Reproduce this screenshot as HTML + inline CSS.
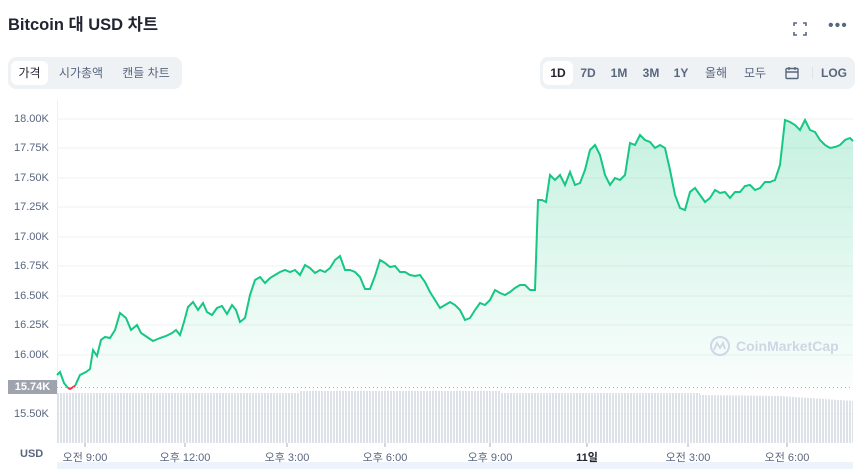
<!DOCTYPE html>
<html><head><meta charset="utf-8"><style>
body{margin:0;width:860px;height:469px;background:#fff;font-family:"Liberation Sans","Noto Sans CJK KR",sans-serif;color:#222531;position:relative;overflow:hidden}
.a{position:absolute}
.title{left:8px;top:11px;font-size:16.5px;font-weight:bold}
.grp{background:#eff2f5;border-radius:8px;height:32px;top:57px}
.tab{position:absolute;top:4px;height:24px;line-height:24px;font-size:12px;color:#58667e;text-align:center}
.act{background:#fff;border-radius:6px;color:#222531}
.b{font-weight:bold}
.yl{font-size:11px;color:#58667e;left:14px}
.xl{font-size:11px;color:#58667e;top:449px;transform:translateX(-50%)}
</style></head><body>
<div class="a title">Bitcoin 대 USD 차트</div>
<svg class="a" style="left:792px;top:21px" width="16" height="16" viewBox="0 0 16 16" fill="none" stroke="#58667e" stroke-width="1.6"><path d="M2 5V2h3M11 2h3v3M14 11v3h-3M5 14H2v-3"/></svg>
<div class="a" style="left:828px;top:17px;font-size:16px;color:#58667e;letter-spacing:1px">•••</div>
<div class="a grp" style="left:8px;width:174px">
<div class="tab act" style="left:3px;width:37px">가격</div>
<div class="tab" style="left:44px;width:58px">시가총액</div>
<div class="tab" style="left:106px;width:64px">캔들 차트</div>
</div>
<div class="a grp" style="left:540px;width:315px">
<div class="tab act b" style="left:3px;width:30px">1D</div>
<div class="tab b" style="left:34px;width:28px">7D</div>
<div class="tab b" style="left:64px;width:30px">1M</div>
<div class="tab b" style="left:96px;width:30px">3M</div>
<div class="tab b" style="left:128px;width:26px">1Y</div>
<div class="tab" style="left:158px;width:36px">올해</div>
<div class="tab" style="left:198px;width:34px">모두</div>
<svg class="a" style="left:245px;top:9px" width="14" height="14" viewBox="0 0 14 14" fill="none" stroke="#58667e" stroke-width="1.4"><rect x="1" y="2.5" width="12" height="10" rx="1"/><path d="M1 6h12M4 1v3M10 1v3"/></svg>
<div class="a" style="left:272px;top:10px;width:1px;height:12px;background:#dfe3e8"></div>
<div class="tab b" style="left:278px;width:32px">LOG</div>
</div>
<div class="a" style="left:57px;top:100px;width:1px;height:343px;background:#eff2f5"></div>
<svg class="a" style="left:0;top:0" width="860" height="469">
<defs><linearGradient id="g" x1="0" y1="0" x2="0" y2="1"><stop offset="0" stop-color="#16c784" stop-opacity=".25"/><stop offset="1" stop-color="#16c784" stop-opacity=".02"/></linearGradient>
<pattern id="v" width="3" height="60" patternUnits="userSpaceOnUse"><rect width="2" height="60" fill="#dde1e8"/></pattern></defs>
<g stroke="#eff2f5"><path d="M57 119H853M57 148H853M57 178H853M57 207H853M57 237H853M57 266H853M57 296H853M57 325H853M57 355H853M57 414H853"/></g>
<path fill="url(#v)" d="M57 393H300V391H500V393H700V395L780 396L853 401V443H57Z"/>
<path fill="url(#g)" d="M57 375L60 372L64 383L70 389L75 386L80 375L86 372L90 369L93 350L97 356L101 340L105 337L110 338L115 330L120 313L126 318L131 330L137 325L141 333L147 337L153 341L160 338L166 336L172 333L176 330L180 335L184 322L188 307L193 302L198 310L203 303L207 312L212 315L217 308L222 306L227 314L232 305L236 310L240 322L245 318L250 295L255 280L260 277L265 283L270 278L275 275L280 272L285 270L290 272L295 270L300 275L305 265L310 268L315 273L320 270L325 272L330 268L335 260L340 256L345 270L350 270L355 272L360 277L365 289L370 289L375 276L380 260L385 263L390 267L395 266L400 272L405 272L410 275L415 276L420 275L425 282L430 292L435 300L440 308L445 305L450 302L455 305L460 310L465 320L470 318L475 310L480 303L485 305L490 300L495 290L500 293L505 295L510 292L515 288L520 285L525 285L530 290L535 290L538 200L542 200L546 202L550 175L555 180L560 175L565 185L570 172L575 185L580 183L585 170L590 150L595 145L600 155L605 175L610 185L615 178L620 180L625 175L630 143L635 145L640 135L645 140L650 142L655 148L660 145L665 148L670 170L675 195L680 208L685 210L690 192L695 188L700 195L705 202L710 198L715 190L720 193L725 192L730 198L735 192L740 192L745 186L750 185L755 190L760 188L765 182L770 182L775 180L780 165L785 120L790 122L795 125L800 130L805 120L810 130L815 132L820 140L825 145L830 148L835 147L840 145L845 140L850 138L853 141V387H57Z"/>
<path fill="none" stroke="#16c784" stroke-width="2" d="M57 375L60 372L64 383L68 388M75 386L80 375L86 372L90 369L93 350L97 356L101 340L105 337L110 338L115 330L120 313L126 318L131 330L137 325L141 333L147 337L153 341L160 338L166 336L172 333L176 330L180 335L184 322L188 307L193 302L198 310L203 303L207 312L212 315L217 308L222 306L227 314L232 305L236 310L240 322L245 318L250 295L255 280L260 277L265 283L270 278L275 275L280 272L285 270L290 272L295 270L300 275L305 265L310 268L315 273L320 270L325 272L330 268L335 260L340 256L345 270L350 270L355 272L360 277L365 289L370 289L375 276L380 260L385 263L390 267L395 266L400 272L405 272L410 275L415 276L420 275L425 282L430 292L435 300L440 308L445 305L450 302L455 305L460 310L465 320L470 318L475 310L480 303L485 305L490 300L495 290L500 293L505 295L510 292L515 288L520 285L525 285L530 290L535 290L538 200L542 200L546 202L550 175L555 180L560 175L565 185L570 172L575 185L580 183L585 170L590 150L595 145L600 155L605 175L610 185L615 178L620 180L625 175L630 143L635 145L640 135L645 140L650 142L655 148L660 145L665 148L670 170L675 195L680 208L685 210L690 192L695 188L700 195L705 202L710 198L715 190L720 193L725 192L730 198L735 192L740 192L745 186L750 185L755 190L760 188L765 182L770 182L775 180L780 165L785 120L790 122L795 125L800 130L805 120L810 130L815 132L820 140L825 145L830 148L835 147L840 145L845 140L850 138L853 141"/>
<path fill="none" stroke="#ea3943" stroke-width="2" d="M68 388L70 389L75 386"/>
<path stroke="#a6b0c3" stroke-dasharray="1 3" d="M57 387.5H853"/>
<g stroke="#a6b0c3"><path d="M85 443v4M185 443v4M287 443v4M385 443v4M490 443v4M587 443v4M688 443v4M787 443v4"/></g>
<circle cx="720" cy="346" r="9" fill="none" stroke="#cfd6e4" stroke-width="2"/>
<path d="M714 350l3-7 3 5 3-5 2 6" fill="none" stroke="#cfd6e4" stroke-width="1.8"/>
<text x="736" y="351" font-size="14" font-weight="bold" fill="#cfd6e4" font-family="Liberation Sans,sans-serif">CoinMarketCap</text>
<rect x="57" y="462" width="796" height="7" fill="#eef2fb"/>
</svg>
<div class="a yl" style="top:113px">18.00K</div>
<div class="a yl" style="top:142px">17.75K</div>
<div class="a yl" style="top:172px">17.50K</div>
<div class="a yl" style="top:201px">17.25K</div>
<div class="a yl" style="top:231px">17.00K</div>
<div class="a yl" style="top:260px">16.75K</div>
<div class="a yl" style="top:290px">16.50K</div>
<div class="a yl" style="top:319px">16.25K</div>
<div class="a yl" style="top:349px">16.00K</div>
<div class="a yl" style="top:408px">15.50K</div>
<div class="a" style="left:8px;top:380px;width:49px;height:14px;background:#9ea3ae;color:#fff;font-size:11px;font-weight:bold;line-height:14px;text-align:center">15.74K</div>
<div class="a" style="left:20px;top:448px;font-size:11px;font-weight:bold;color:#58667e">USD</div>
<div class="a xl" style="left:85px">오전 9:00</div>
<div class="a xl" style="left:185px">오후 12:00</div>
<div class="a xl" style="left:287px">오후 3:00</div>
<div class="a xl" style="left:385px">오후 6:00</div>
<div class="a xl" style="left:490px">오후 9:00</div>
<div class="a xl" style="left:587px;font-weight:bold;color:#222531">11일</div>
<div class="a xl" style="left:688px">오전 3:00</div>
<div class="a xl" style="left:787px">오전 6:00</div>
</body></html>
